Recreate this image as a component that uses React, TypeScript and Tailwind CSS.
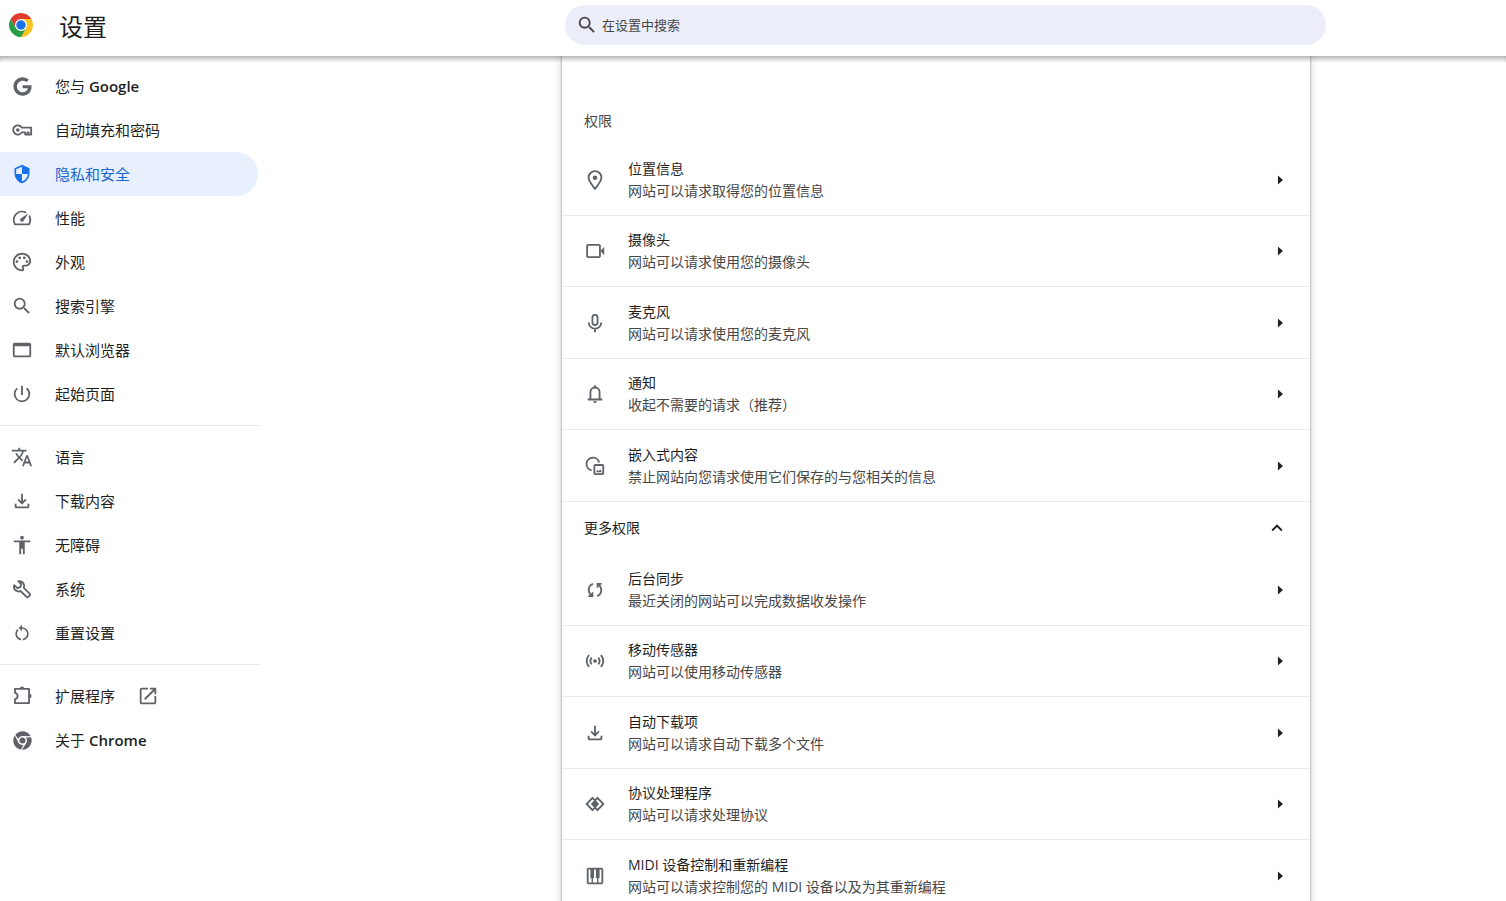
import { useState } from 'react'
import type { ReactNode } from 'react'
import { FaChrome, FaGoogle } from 'react-icons/fa'
import {
  MdAccessibility,
  MdOpenInNew,
  MdOutlinePalette,
  MdOutlinePiano,
  MdPowerSettingsNew,
  MdRestartAlt,
  MdSearch,
  MdSecurity,
  MdSensors,
  MdSpeed,
  MdTranslate,
} from 'react-icons/md'

interface NavItem {
  label: string
  latin?: string
  icon: ReactNode
  external?: boolean
}

interface Permission {
  title: string
  desc: string
  icon: ReactNode
}

function Glyph({ d }: { d: string }) {
  return (
    <svg viewBox="0 0 24 24" className="size-[22px]" fill="currentColor" aria-hidden="true">
      <path d={d} />
    </svg>
  )
}

function Outline({ children }: { children: ReactNode }) {
  return (
    <svg viewBox="0 0 24 24" className="size-[22px]" fill="none" stroke="currentColor" strokeWidth="2" aria-hidden="true">
      {children}
    </svg>
  )
}

function ChromeLogo() {
  return (
    <svg viewBox="0 0 48 48" className="size-6 shrink-0" aria-hidden="true">
      <circle cx="24" cy="24" r="12" fill="#fff" />
      <path fill="#e33b2e" d="M24 12h20.78a24 24 0 0 0-41.56 0L13.61 30A12 12 0 0 1 24 12z" />
      <path fill="#fcc31e" d="M34.39 30L24 48a24 24 0 0 0 20.78-36H24a12 12 0 0 1 10.39 18z" />
      <path fill="#2a9d48" d="M13.61 30L3.22 12A24 24 0 0 0 24 48l10.39-18a12 12 0 0 1-20.78 0z" />
      <circle cx="24" cy="24" r="9.5" fill="#1a73e8" />
    </svg>
  )
}

function KeyIcon() {
  return (
    <Outline>
      <path strokeLinejoin="round" d="M11.7 9.4a5 5 0 1 0 0 5.200H15.500v2.400H18v-2.400h1.200V17H22V9.400z" />
      <circle cx="7.400" cy="12" r="2" fill="currentColor" stroke="none" />
    </Outline>
  )
}

function WrenchIcon() {
  return (
    <Outline>
      <path strokeLinejoin="round" d="M8 3.500l3.300 3.300-1.200 3.200-3.200 1.100L3.500 7.800c-.7 2.400.1 4.700 1.900 5.900 1.600 1.100 3.500 1.200 5.100.5l6.400 6.300c.6.6 1.400.6 2 0l1.400-1.400c.6-.6.6-1.400 0-2l-6.300-6.300c.7-1.700.6-3.700-.6-5.300C12.200 3.800 10.200 3 8 3.500z" />
    </Outline>
  )
}

function ExtensionIcon() {
  return (
    <Outline>
      <path strokeLinejoin="round" d="M4.300 4.300h15.400v15.400H4.300v-4.200c1.800-.4 2.900-1.800 2.900-3.500S6.100 8.900 4.300 8.500z" />
      <path stroke="none" fill="currentColor" d="M9.600 4a2.400 2.400 0 0 1 4.800 0zM20 9.600a2.400 2.400 0 0 1 0 4.800z" />
    </Outline>
  )
}

function PlaceIcon() {
  return (
    <Outline>
      <path d="M12 21.600C8 16.800 5 13 5 9.300a7 7 0 0 1 14 0c0 3.700-3 7.500-7 12.300z" />
      <circle cx="12" cy="9.500" r="2.500" fill="currentColor" stroke="none" />
    </Outline>
  )
}

function CameraIcon() {
  return (
    <Outline>
      <rect x="3.400" y="5.400" width="14" height="13.200" rx="1" />
      <path stroke="none" fill="currentColor" d="M18 12l4-4.600v9.200z" />
    </Outline>
  )
}

function MicIcon() {
  return (
    <Outline>
      <rect x="9.200" y="3.200" width="5.600" height="11" rx="2.800" />
      <path d="M5.200 11.500a6.800 6.800 0 0 0 13.600 0M12 18v4" />
    </Outline>
  )
}

function EmbeddedIcon() {
  return (
    <Outline>
      <path d="M16.500 8.200A7 7 0 1 0 8.300 16.800" />
      <rect x="11.300" y="10.900" width="9.700" height="9.900" rx="1" />
      <path stroke="none" fill="currentColor" d="M13 18.800l1.700-2.500 1.300 1.500 1.800-2.200 1.700 3.200z" />
    </Outline>
  )
}

function SyncIcon() {
  return (
    <Outline>
      <path d="M9.800 5.400C4.200 7.200 3.600 14.500 8.400 18M4.800 18.600h4.400v-4.200" />
      <path d="M14.200 18.600c5.600-1.800 6.200-9.100 1.400-12.600M19.200 5.400h-4.400v4.200" />
    </Outline>
  )
}

function ProtocolIcon() {
  return (
    <Outline>
      <path d="M12 8L9.300 5.300 2.900 12l6.400 6.700L12 16M12 8l2.700-2.700L21.100 12l-6.400 6.700L12 16" />
      <path stroke="none" fill="currentColor" d="M12 7.200l4.600 4.800-4.600 4.800L7.400 12z" />
    </Outline>
  )
}

const DOWNLOAD =
  'M12 16l-5-5 1.400-1.450 2.600 2.600V4h2v8.150l2.600-2.600L17 11l-5 5zm-6 4c-.55 0-1.020-.2-1.410-.59A1.930 1.930 0 0 1 4 18v-3h2v3h12v-3h2v3c0 .55-.2 1.020-.59 1.410-.39.39-.86.59-1.410.59H6z'
const WINDOW = 'M20 4H4a2 2 0 0 0-2 2v12a2 2 0 0 0 2 2h16a2 2 0 0 0 2-2V6a2 2 0 0 0-2-2zm0 14H4V8h16z'
const BELL =
  'M4 19v-2h2v-7c0-1.380.42-2.610 1.250-3.690A5.930 5.930 0 0 1 10.500 4.200L12 1.500l1.500 2.700a5.930 5.930 0 0 1 3.250 2.110A5.900 5.900 0 0 1 18 10v7h2v2H4zm8 3a2 2 0 0 1-2-2h4a2 2 0 0 1-2 2zm-4-5h8v-7a4 4 0 0 0-8 0v7z'
const ARROW_RIGHT = 'M13 7v10l5.500-5z'
const CHEVRON_UP = 'M12 8l-6 6 1.410 1.410L12 10.830l4.590 4.580L18 14z'
const CHEVRON_DOWN = 'M16.590 8.590L12 13.170 7.410 8.590 6 10l6 6 6-6z'

const NAV: NavItem[][] = [
  [
    { label: '您与', latin: 'Google', icon: <FaGoogle size={19} /> },
    { label: '自动填充和密码', icon: <KeyIcon /> },
    { label: '隐私和安全', icon: <MdSecurity size={20} /> },
    { label: '性能', icon: <MdSpeed size={22} /> },
    { label: '外观', icon: <MdOutlinePalette size={22} /> },
    { label: '搜索引擎', icon: <MdSearch size={22} /> },
    { label: '默认浏览器', icon: <Glyph d={WINDOW} /> },
    { label: '起始页面', icon: <MdPowerSettingsNew size={22} /> },
  ],
  [
    { label: '语言', icon: <MdTranslate size={22} /> },
    { label: '下载内容', icon: <Glyph d={DOWNLOAD} /> },
    { label: '无障碍', icon: <MdAccessibility size={22} /> },
    { label: '系统', icon: <WrenchIcon /> },
    { label: '重置设置', icon: <MdRestartAlt size={20} /> },
  ],
  [
    { label: '扩展程序', icon: <ExtensionIcon />, external: true },
    { label: '关于', latin: 'Chrome', icon: <FaChrome size={19} /> },
  ],
]

const PERMISSIONS: Permission[] = [
  { title: '位置信息', desc: '网站可以请求取得您的位置信息', icon: <PlaceIcon /> },
  { title: '摄像头', desc: '网站可以请求使用您的摄像头', icon: <CameraIcon /> },
  { title: '麦克风', desc: '网站可以请求使用您的麦克风', icon: <MicIcon /> },
  { title: '通知', desc: '收起不需要的请求（推荐）', icon: <Glyph d={BELL} /> },
  { title: '嵌入式内容', desc: '禁止网站向您请求使用它们保存的与您相关的信息', icon: <EmbeddedIcon /> },
]

const MORE_PERMISSIONS: Permission[] = [
  { title: '后台同步', desc: '最近关闭的网站可以完成数据收发操作', icon: <SyncIcon /> },
  { title: '移动传感器', desc: '网站可以使用移动传感器', icon: <MdSensors size={22} /> },
  { title: '自动下载项', desc: '网站可以请求自动下载多个文件', icon: <Glyph d={DOWNLOAD} /> },
  { title: '协议处理程序', desc: '网站可以请求处理协议', icon: <ProtocolIcon /> },
  { title: 'MIDI 设备控制和重新编程', desc: '网站可以请求控制您的 MIDI 设备以及为其重新编程', icon: <MdOutlinePiano size={22} /> },
]

function PermissionList({ items }: { items: Permission[] }) {
  return (
    <ul>
      {items.map(item => (
        <li key={item.title} className="group">
          <button
            type="button"
            className="flex min-h-[72px] w-full items-center gap-[22px] border-b border-[#ebebeb] px-[22px] text-left leading-[22px] group-even:min-h-[71px]"
          >
            <span className="flex w-[22px] shrink-0 justify-center text-[#5f6368]">{item.icon}</span>
            <span className="min-w-0 flex-1">
              <span className="block text-[#1f1f1f]">{item.title}</span>
              <span className="block text-[#474747]">{item.desc}</span>
            </span>
            <Glyph d={ARROW_RIGHT} />
          </button>
        </li>
      ))}
    </ul>
  )
}

export default function App() {
  const [active, setActive] = useState('隐私和安全')
  const [query, setQuery] = useState('')
  const [expanded, setExpanded] = useState(true)

  return (
    <div className="flex h-screen flex-col overflow-hidden bg-white font-['Open_Sans','Noto_Sans_CJK_SC',sans-serif] text-sm text-[#1f1f1f]">
      <header className="relative z-10 flex h-14 shrink-0 items-center bg-white pb-1.5">
        <div className="flex w-[385px] shrink-0 items-center gap-[26px] pl-[9px]">
          <ChromeLogo />
          <h1 className="pt-1 text-2xl leading-8">设置</h1>
        </div>
        <div className="flex min-w-0 flex-1 justify-center">
          <label className="flex h-10 w-full max-w-[761px] items-center gap-1 rounded-full bg-[#ebeef8] pl-[11px] pr-4 text-[#474747]">
            <MdSearch size={22} />
            <input
              type="text"
              aria-label="在设置中搜索"
              placeholder="在设置中搜索"
              value={query}
              onChange={e => setQuery(e.target.value)}
              className="min-w-0 flex-1 bg-transparent text-[13px] outline-none placeholder:text-[#474747]"
            />
          </label>
        </div>
        <div className="pointer-events-none absolute inset-x-0 top-full h-1.5 shadow-[inset_0_5px_6px_-3px_rgba(0,0,0,0.4)]" />
      </header>

      <div className="flex min-h-0 flex-1">
        <nav className="w-[260px] shrink-0 overflow-hidden pt-2 text-[15px]">
          {NAV.map((group, i) => (
            <div key={i}>
              {i > 0 && <hr className="my-[9px] border-[#e8eaed]" />}
              {group.map(item => (
                <a
                  key={item.label}
                  href="#"
                  onClick={() => setActive(item.label)}
                  className={`mr-0.5 flex h-11 items-center gap-[22px] rounded-r-full pl-[11px] ${active === item.label ? 'bg-[#e8f0fe] text-[#1967d2]' : 'text-[#1f1f1f]'}`}
                >
                  <span className={`flex w-[22px] shrink-0 justify-center ${active === item.label ? 'text-[#1a73e8]' : 'text-[#5f6368]'}`}>
                    {item.icon}
                  </span>
                  <span className="pt-0.5">
                    {item.label}
                    {item.latin && <span className="font-semibold"> {item.latin}</span>}
                  </span>
                  {item.external && <MdOpenInNew size={22} className="text-[#5f6368]" />}
                </a>
              ))}
            </div>
          ))}
        </nav>

        <main className="flex min-w-0 flex-1 items-start justify-center overflow-hidden pl-[106px]">
          <section className="w-full max-w-[748px] pt-[54px] shadow-[0_1px_2px_0_rgba(60,64,67,0.3),0_0_2px_0_rgba(60,64,67,0.4),0_2px_8px_2px_rgba(60,64,67,0.15)]">
            <h2 className="mb-3 px-[22px] leading-[22px] text-[#474747]">权限</h2>
            <PermissionList items={PERMISSIONS} />
            <button
              type="button"
              aria-expanded={expanded}
              onClick={() => setExpanded(!expanded)}
              className="flex h-[52px] w-full items-center justify-between px-[22px] text-left"
            >
              更多权限
              <Glyph d={expanded ? CHEVRON_UP : CHEVRON_DOWN} />
            </button>
            {expanded && <PermissionList items={MORE_PERMISSIONS} />}
          </section>
        </main>
      </div>
    </div>
  )
}
